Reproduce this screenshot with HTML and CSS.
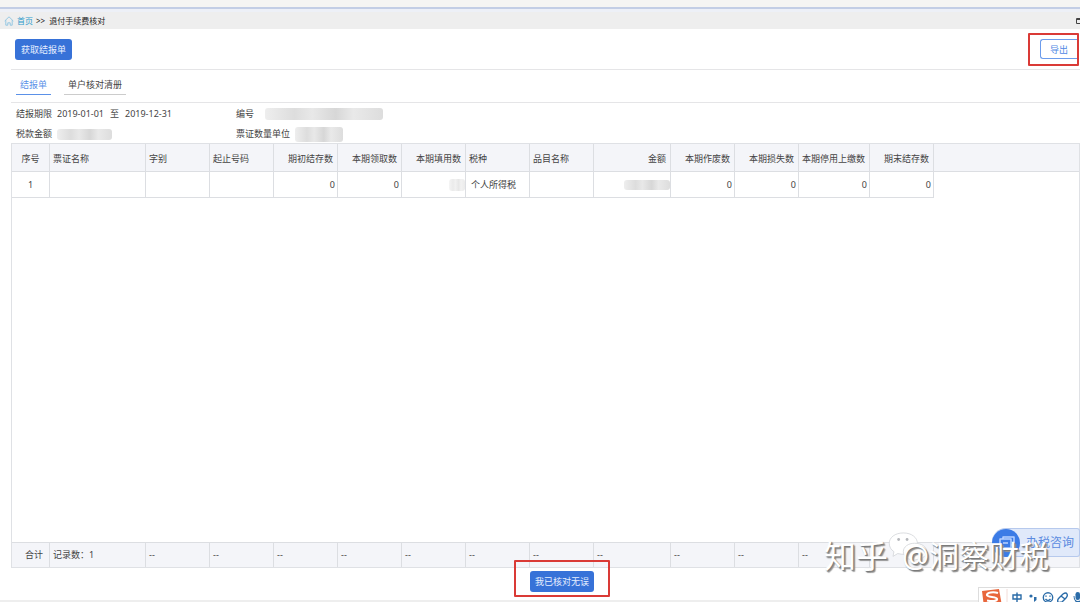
FILE: index.html
```html
<!DOCTYPE html>
<html lang="zh-CN">
<head>
<meta charset="utf-8">
<title>退付手续费核对</title>
<link rel="stylesheet" href="styles.css">
</head>
<body>
<div class="page">
  <div class="top-strip"></div>
  <nav class="crumbs">
    <svg class="home" viewBox="0 0 10 10"><path d="M.7 5 5 .8 9.300 5M1.800 4.200v5h2v-2.400h2.400v2.400h2v-5" fill="none" stroke="#82bfe0" stroke-width=".8" stroke-linejoin="round"/></svg>
    <a href="#">首页</a><span class="sep">&gt;&gt;</span><span>退付手续费核对</span>
    <svg class="window-icon" viewBox="0 0 4 6"><path d="M4 .5H.5v5H4M.5 1.500H4" fill="none" stroke="#444"/></svg>
  </nav>
  <main class="content">
    <div class="toolbar">
      <button class="primary" type="button">获取结报单</button>
      <div class="mark mark-export"><button class="outline" type="button">导出</button></div>
    </div>
    <div class="tabs" role="tablist">
      <button class="tab active" role="tab" aria-selected="true" type="button">结报单</button>
      <button class="tab" role="tab" aria-selected="false" type="button">单户核对清册</button>
    </div>
    <dl class="info">
      <div><dt>结报期限</dt><dd class="period"><span>2019-01-01</span><span>至</span><span>2019-12-31</span></dd></div>
      <div><dt>编号</dt><dd class="masked mask-id"></dd></div>
      <div><dt>税款金额</dt><dd class="masked mask-tax"></dd></div>
      <div><dt>票证数量单位</dt><dd class="masked mask-unit"></dd></div>
    </dl>
    <div class="grid">
      <table>
        <colgroup><col class="c-no"><col class="c-name"><col span="7" class="c-std"><col class="c-sum"><col span="2" class="c-std"><col class="c-stop"><col class="c-std"><col></colgroup>
        <thead><tr><th class="mid">序号</th><th>票证名称</th><th>字别</th><th>起止号码</th><th class="num">期初结存数</th><th class="num">本期领取数</th><th class="num">本期填用数</th><th>税种</th><th>品目名称</th><th class="num">金额</th><th class="num">本期作废数</th><th class="num">本期损失数</th><th class="num">本期停用上缴数</th><th class="num">期末结存数</th><th></th></tr></thead>
        <tbody><tr><td class="mid">1</td><td></td><td></td><td></td><td class="num">0</td><td class="num">0</td><td class="num hidden-value"><span class="masked mask-count"></span></td><td class="text">个人所得税</td><td></td><td class="num hidden-value"><span class="masked mask-sum"></span></td><td class="num">0</td><td class="num">0</td><td class="num">0</td><td class="num">0</td><td class="rest"></td></tr></tbody>
      </table>
      <table class="totals">
        <colgroup><col class="c-no"><col class="c-name"><col span="7" class="c-std"><col class="c-sum"><col span="2" class="c-std"><col class="c-stop"><col class="c-std"><col></colgroup>
        <tbody><tr><td class="num">合计</td><td>记录数：1</td><td>--</td><td>--</td><td>--</td><td>--</td><td>--</td><td>--</td><td>--</td><td>--</td><td>--</td><td>--</td><td>--</td><td></td><td></td></tr></tbody>
      </table>
    </div>
    <div class="confirm"><div class="mark mark-confirm"><button class="primary" type="button">我已核对无误</button></div></div>
  </main>
  <div class="bottom-strip"></div>
  <button class="consult" type="button">
    <span class="consult-icon"><svg viewBox="0 0 28 28"><circle cx="14" cy="14" r="14" fill="#3b7be6"/><path d="M8 10h11v9H8zM11 10V8h11v8h-3M11 14h5" fill="none" stroke="#b9d2ff" stroke-width="1.500" stroke-linejoin="round"/></svg></span>
    <span>办税咨询</span>
  </button>
  <div class="watermark">
    <span>知乎</span>
    <svg class="bubbles" viewBox="0 0 42 32"><g fill="#fff" stroke="#cfd1d5" stroke-width=".8"><path d="M16 1C7 1 1 6 1 12c0 4 2 7 5 9l-1 5 5-3c12 3 21-3 21-11C31 6 25 1 16 1z"/><path d="M28 12c-7 0-12 4-12 9s5 9 12 9l4-1 5 3-1-4c3-2 5-4 5-7 0-5-5-9-13-9z"/></g><g fill="#b5b7bb"><circle cx="11" cy="8" r="1.500"/><circle cx="20" cy="8" r="1.500"/></g></svg>
    <span>@洞察财税</span>
  </div>
  <div class="ime">
    <svg viewBox="0 0 102 15">
      <path d="M3 3 20 1 23 18 5 19z" fill="#e8663c"/><path d="M19 5c-5-1.500-11-.5-11 2s10 1.500 10 4-5 2.500-10 1.500" fill="none" stroke="#fff" stroke-width="2.200"/>
      <path d="M28 1v14" stroke="#f2dcd8"/>
      <g fill="none" stroke="#2b6ca8" stroke-width="1.400"><path d="M34 7h8v4h-8zM38 4.500v10"/><circle cx="69" cy="9.500" r="4.700"/><path d="M66.500 11q2.500 3 5 0M67 7.500v1.200M71 7.500v1.200M80 10l4-4q3-2 4 0 1 2-1 4l-4 4q-3 1-4 0-1-2 1-4z"/><path d="m82 8 4 3"/></g>
      <g fill="#2b6ca8"><circle cx="52" cy="8" r="1.600"/><path d="M55 9h2.500v3l-2.500 2z"/><rect x="96.500" y="4" width="4.500" height="8" rx="2.200"/><path d="M94.500 8h1q0 5 3.500 5t3-3v5h-4q-3.500-2-3.500-7z"/></g>
    </svg>
  </div>
</div>
</body>
</html>
```
FILE: styles.css
```css
* { box-sizing: border-box; }
body {
  margin: 0;
  background: #fff;
  color: #444;
  font: 9px/12px "Noto Sans", "Noto Sans CJK SC", sans-serif;
}
button { font: inherit; cursor: pointer; }
.page {
  position: relative;
  display: flex;
  flex-direction: column;
  min-height: 100vh;
  overflow: hidden;
}
.top-strip { height: 9px; background: #f5f5f3; border-bottom: 2px solid #c3cee5; }
.bottom-strip { height: 2px; background: #eee; }
.crumbs {
  display: flex;
  align-items: center;
  height: 20px;
  padding-left: 4px;
  background: #eee;
  border-top: 3px solid #edf0f7;
  color: #222;
  font-size: 8px;
}
.crumbs a { margin-left: 3px; color: #2e9bcb; text-decoration: none; }
.sep { margin: 0 4px 0 3px; }
.home { width: 10px; height: 10px; }
.window-icon { width: 4px; height: 6px; margin-left: auto; }
.content { display: flex; flex: 1; flex-direction: column; padding-left: 11px; }
.toolbar {
  display: flex;
  align-items: center;
  justify-content: space-between;
  height: 41px;
  padding: 0 1px 0 4px;
  border-bottom: 1px solid #e5e5e7;
}
.primary {
  height: 21px;
  padding: 1px 6px 0;
  border: 0;
  border-radius: 3px;
  background: #3772d8;
  color: #e6efff;
}
.mark { display: flex; border: 2px solid #da3a36; border-radius: 1px; }
.mark-export { width: 51px; height: 33px; align-items: center; justify-content: flex-end; }
.outline {
  width: 37px;
  height: 20px;
  padding: 1px 0 0;
  border: 1px solid #6c9cec;
  border-right: 0;
  border-radius: 3px 0 0 3px;
  background: #fff;
  color: #5188e4;
}
.tabs {
  display: flex;
  gap: 13px;
  height: 33px;
  padding: 5px;
  border-bottom: 1px solid #e5e5e7;
}
.tab {
  height: 20px;
  padding: 0 4px;
  border: 0;
  border-bottom: 1px solid #ccc;
  background: none;
  color: #444;
}
.tab.active { border-color: #5b91e8; color: #5b91e8; }
.info {
  display: grid;
  grid-template-columns: 220px 1fr;
  grid-auto-rows: 20px;
  height: 40px;
  margin: 0;
  padding: 1px 5px 0;
}
.info div { display: flex; align-items: center; gap: 5px; }
.info dd { margin: 0; }
.info .period { display: flex; gap: 6px; }
.masked {
  display: inline-block;
  border-radius: 3px;
  background: linear-gradient(90deg, #eee, #ddd 25%, #e8e8e8 40%, #d7d7d7 60%, #e9e9e9 75%, #ddd);
}
.info .mask-id { width: 118px; height: 12px; margin-left: 6px; }
.mask-tax { width: 55px; height: 11px; }
.mask-unit { width: 48px; height: 15px; }
.mask-count { width: 16px; height: 12px; vertical-align: middle; opacity: .6; }
.mask-sum { width: 46px; height: 10px; vertical-align: middle; }
.grid {
  display: flex;
  flex: 1;
  flex-direction: column;
  justify-content: space-between;
  border: 1px solid #dfe1e5;
}
table { width: 100%; table-layout: fixed; border-collapse: separate; border-spacing: 0; }
th, td {
  height: 26px;
  padding: 0 3px;
  border-right: 1px solid #dcdee2;
  border-bottom: 1px solid #dcdee2;
  text-align: left;
  font-weight: 400;
  white-space: nowrap;
}
th { height: 28px; padding-top: 2px; background: #f4f5f9; }
th:last-child, td:last-child { border-right: 0; }
.rest { border: 0; }
th.num { padding-right: 4px; }
.num { text-align: right; }
td.num { padding-right: 2px; }
td.hidden-value { padding-right: 0; }
td.text { padding-left: 5px; }
.mid { text-align: center; }
.totals td { height: 25px; border-bottom: 0; border-top: 1px solid #dcdee2; background: #f4f5f9; }
.totals td.num { padding-right: 6px; }
.c-no { width: 38px; }
.c-name { width: 96px; }
.c-std { width: 64px; }
.c-sum { width: 77px; }
.c-stop { width: 71px; }
.confirm { display: flex; justify-content: center; height: 32px; padding-left: 33px; }
.mark-confirm {
  position: relative;
  width: 96px;
  height: 37px;
  margin-top: -8px;
  align-items: center;
  justify-content: center;
  padding-top: 6px;
}
.mark-confirm .primary { width: 64px; padding: 1px 0 0; }
.consult {
  position: absolute;
  right: 0;
  bottom: 45px;
  display: flex;
  align-items: center;
  gap: 6px;
  width: 88px;
  height: 29px;
  padding: 0;
  border: 1px solid #b6c9ed;
  border-left: 0;
  border-radius: 14px 3px 3px 14px;
  background: #e0e9fa;
  color: #5b8be0;
  font-size: 12px;
  white-space: nowrap;
}
.consult-icon, .consult-icon svg { display: block; width: 28px; height: 28px; }
.watermark {
  position: absolute;
  right: 31px;
  bottom: 26px;
  display: flex;
  align-items: center;
  color: #fff;
  font-size: 30px;
  line-height: 40px;
  text-shadow: 1px 1px 1px #777, 2px 2px 1px #999;
  white-space: nowrap;
}
.watermark span { position: relative; }
.watermark span:first-child { font-size: 32px; }
.bubbles { width: 40px; height: 30px; margin: -18px -26px 0 0; }
.ime {
  position: absolute;
  right: 0;
  bottom: 0;
  width: 102px;
  height: 15px;
  border-top: 1px solid #ddd;
  border-left: 1px solid #ddd;
  background: #fff;
}
.ime svg { display: block; width: 102px; height: 15px; }
```
